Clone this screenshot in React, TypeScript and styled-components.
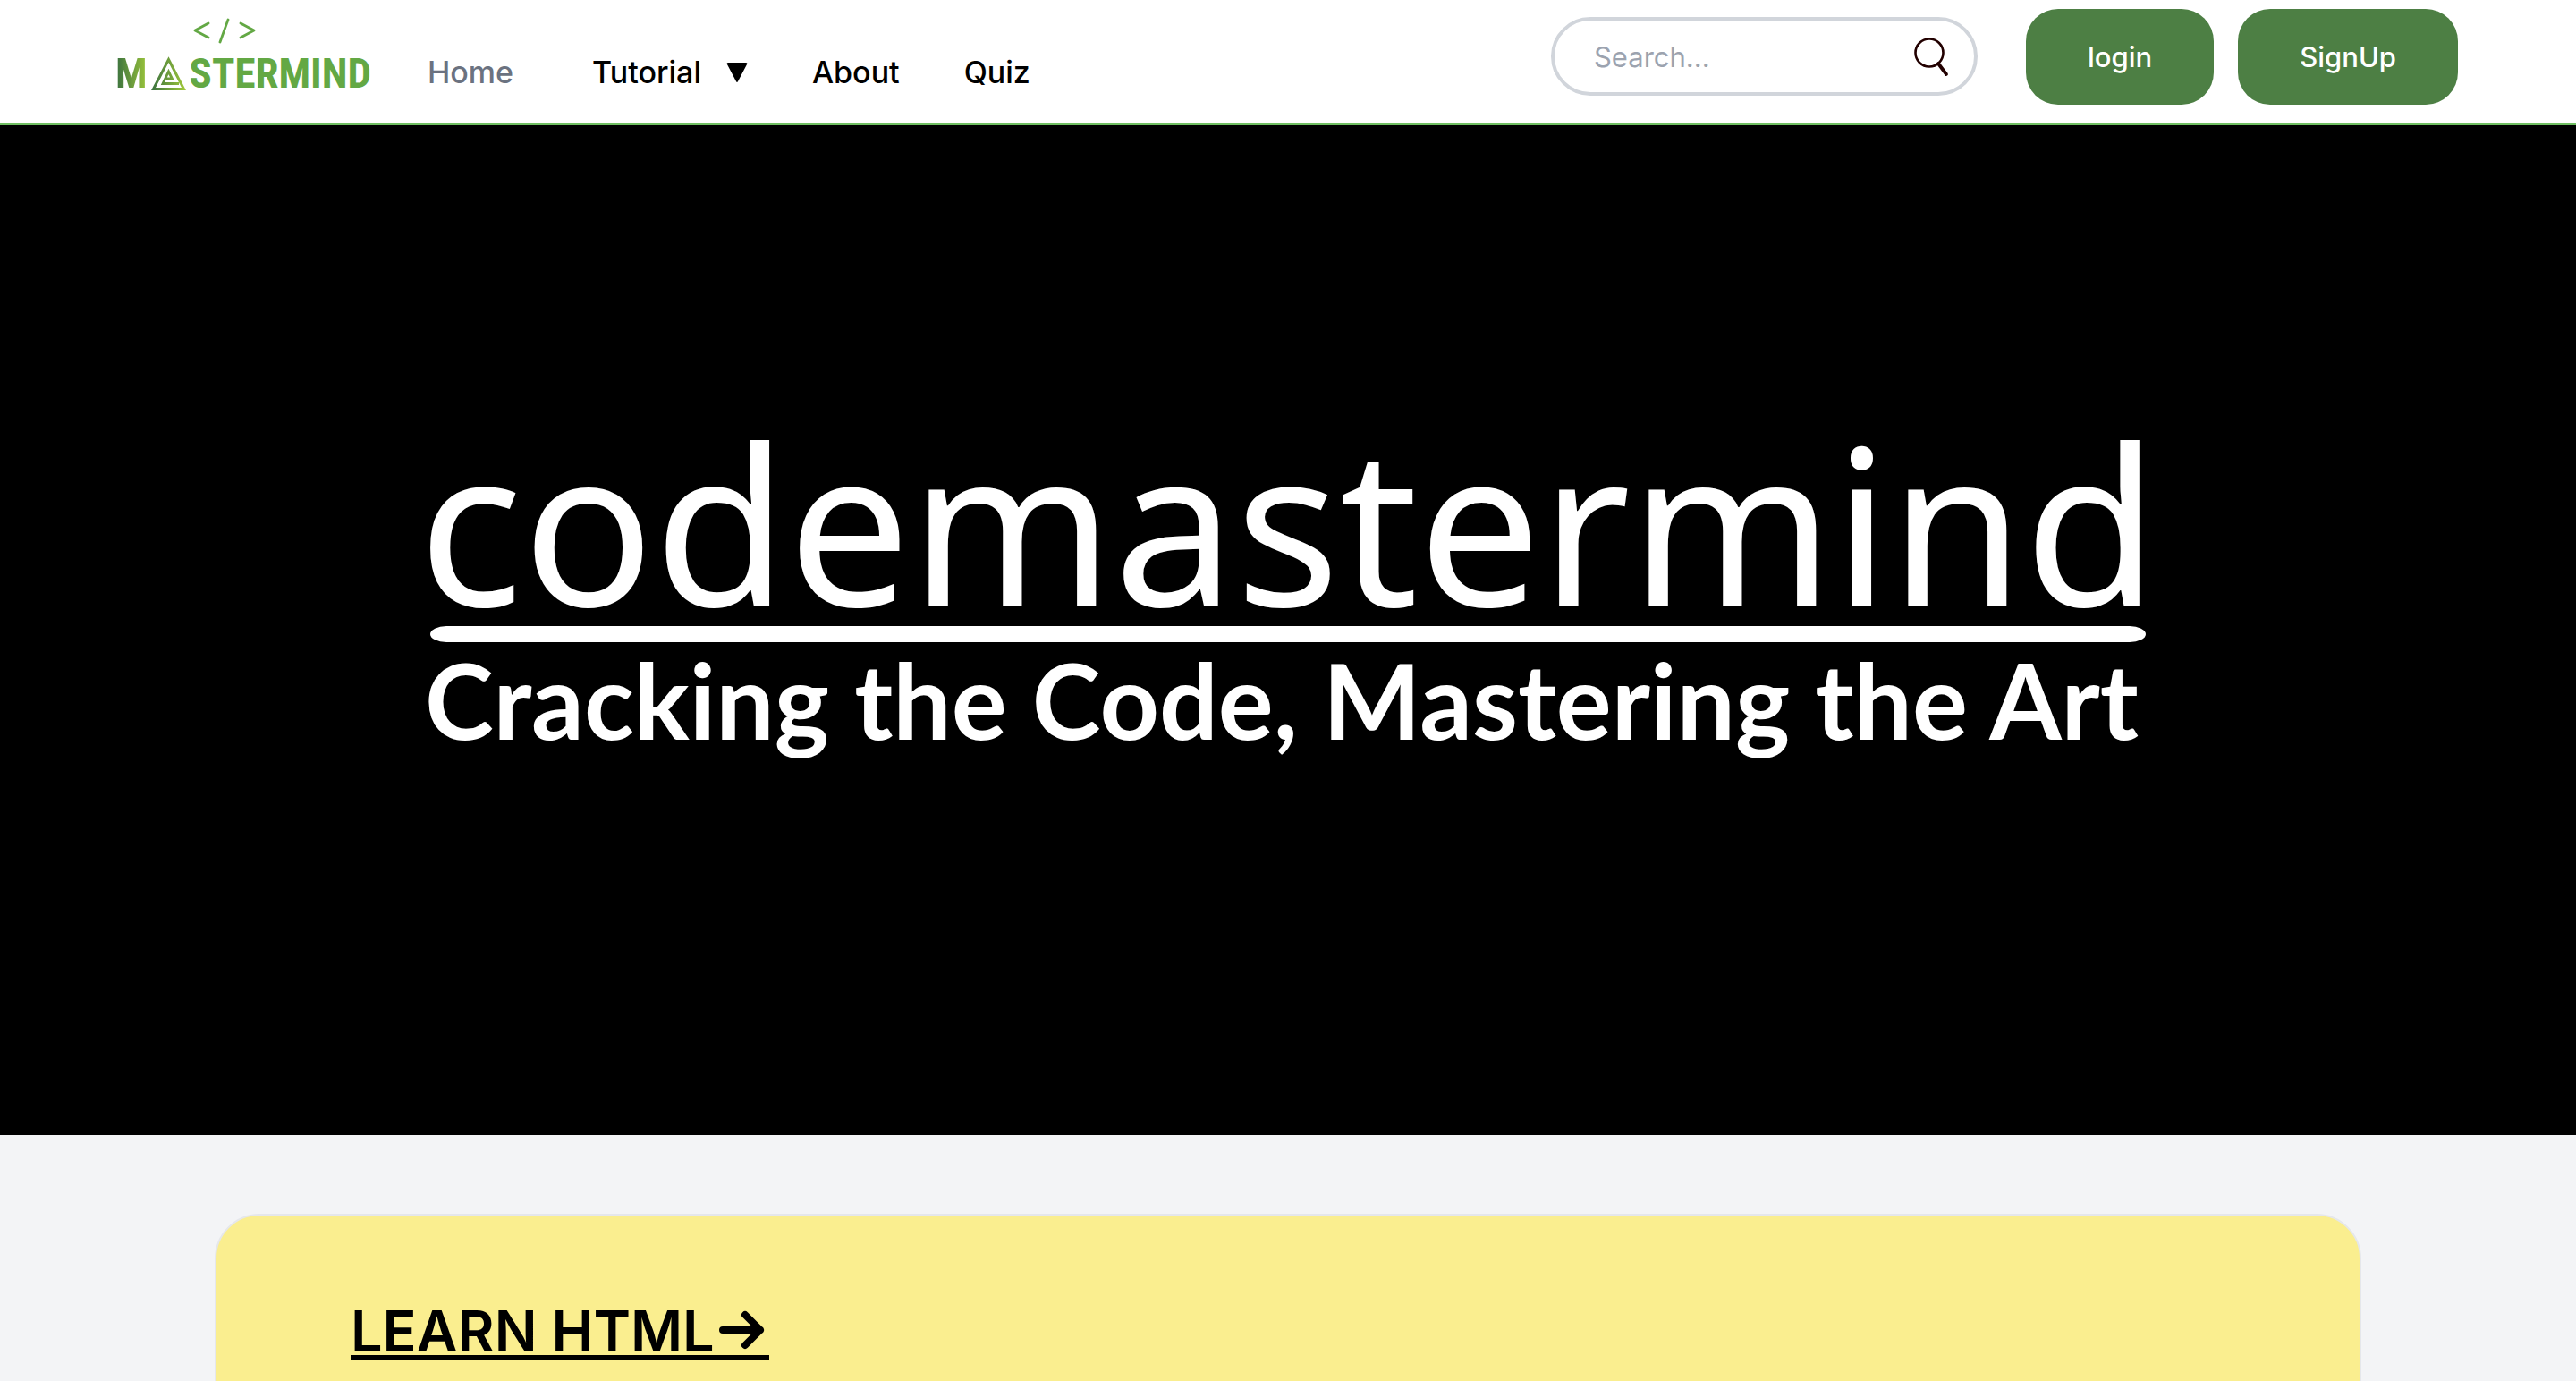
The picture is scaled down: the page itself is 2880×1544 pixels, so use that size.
import React from "react";
import styled, { createGlobalStyle } from "styled-components";

const GlobalStyle = createGlobalStyle`
  *, *::before, *::after { box-sizing: border-box; }
  body {
    margin: 0;
    background: #f3f4f6;
    color: #000;
    font-family: Inter, "Liberation Sans", sans-serif;
  }
`;

const Header = styled.header`
  display: flex;
  align-items: flex-start;
  height: 140px;
  padding: 10px 132px 0 131px;
  background: #fff;
  border-bottom: 2px solid #70bf62;
`;

const Brand = styled.a`
  display: flex;
  flex-direction: column;
  align-items: center;
  width: 282px;
  padding-top: 10px;
  color: #63a844;
  text-decoration: none;
`;

const CodeMark = styled.svg`
  display: block;
  width: 70px;
  height: 30px;
  margin-right: 42px;
`;

const BrandName = styled.span`
  display: flex;
  align-items: center;
  padding-top: 2px;
  font-family: "Roboto Condensed", Roboto, sans-serif;
  font-size: 47px;
  line-height: 60px;
  font-weight: 700;
`;

const BrandInitial = styled.span`
  color: transparent;
  background: linear-gradient(90deg, #39703f, #9bc53b);
  background-clip: text;
`;

const BrandTriangle = styled.svg`
  width: 39px;
  height: 38px;
  margin: 0 4px;
`;

const Nav = styled.nav`
  display: flex;
  gap: 72px;
  padding: 49px 0 0 65px;
  font-size: 34px;
  line-height: 44px;
  font-weight: 500;
`;

const NavLink = styled.a<{ $current?: boolean }>`
  display: flex;
  align-items: center;
  gap: 28px;
  margin-right: ${(p) => (p.$current ? "16px" : "0")};
  color: ${(p) => (p.$current ? "#6b7280" : "#000")};
  text-decoration: none;
`;

const Caret = styled.svg`
  width: 24px;
  height: 24px;
`;

const Actions = styled.div`
  display: flex;
  align-items: flex-start;
  gap: 27px;
  margin-left: auto;
`;

const SearchBox = styled.form`
  display: flex;
  align-items: center;
  width: 477px;
  height: 88px;
  margin: 9px 27px 0 0;
  padding: 2px 28px 0 44px;
  border: 4px solid #d1d5db;
  border-radius: 44px;
`;

const SearchInput = styled.input`
  flex: 1;
  min-width: 0;
  padding: 0;
  border: 0;
  outline: 0;
  background: transparent;
  font: 400 31px/48px Inter, "Liberation Sans", sans-serif;
  &::placeholder { color: #9ca3af; opacity: 1; }
`;

const SearchButton = styled.button`
  display: flex;
  padding: 0;
  border: 0;
  background: transparent;
  svg { width: 40px; height: 44px; }
`;

const Button = styled.button`
  height: 107px;
  padding: 0 69px;
  border: 0;
  border-radius: 36px;
  background: #4d7f44;
  color: #fff;
  font: 500 31px/48px Inter, "Liberation Sans", sans-serif;
`;

const Hero = styled.section`
  display: flex;
  flex-direction: column;
  align-items: center;
  height: 1129px;
  padding-top: 328px;
  background: #000;
  color: #fff;
`;

const Wordmark = styled.h1`
  margin: 0;
  font: 400 243px/232px "Noto Sans", "Open Sans", sans-serif;
`;

const Rule = styled.hr`
  width: 1918px;
  height: 18px;
  margin: 0;
  border: 0;
  border-radius: 18px / 9px;
  background: #fff;
`;

const Tagline = styled.p`
  margin: 0;
  padding-right: 14px;
  font: 700 116px/130px Lato, "Noto Sans", sans-serif;
`;

const Lessons = styled.main`
  padding: 88px 240px 0;
  height: 275px;
  overflow: hidden;
`;

const Card = styled.article`
  height: 600px;
  padding: 102px 150px;
  border: 2px solid #e5e7eb;
  border-radius: 50px;
  background: #faee8f;
`;

const LessonTitle = styled.h2`
  display: flex;
  margin: 0;
  font-size: 63px;
  line-height: 54px;
  font-weight: 600;
`;

const LessonLink = styled.a`
  display: flex;
  border-bottom: 6px solid #000;
  color: #000;
  text-decoration: none;
`;

const Arrow = styled.svg`
  width: 61px;
  height: 54px;
`;

export default function App() {
  return (
    <>
      <GlobalStyle />
      <Header>
        <Brand href="#" aria-label="Mastermind">
          <CodeMark viewBox="0 0 70 30" fill="none" stroke="currentColor" strokeWidth="2.8" strokeLinecap="round" strokeLinejoin="round">
            <path d="M17 6 2 14l15 8M39 2 30 27M53 6l15 8-15 8" />
          </CodeMark>
          <BrandName>
            <BrandInitial>M</BrandInitial>
            <BrandTriangle viewBox="0 0 39 38" fill="none">
              <defs>
                <linearGradient id="tri" gradientUnits="userSpaceOnUse" x1="0" y1="0" x2="39" y2="0">
                  <stop offset="0" stopColor="#39703f" />
                  <stop offset="1" stopColor="#a3cb3a" />
                </linearGradient>
              </defs>
              <path d="M19.5 3.5 36.5 36.5h-34Z" stroke="url(#tri)" strokeWidth="3" />
              <path d="M31 30.5H13L19.5 17l4 8H17" stroke="url(#tri)" strokeWidth="2.8" />
            </BrandTriangle>
            STERMIND
          </BrandName>
        </Brand>
        <Nav>
          <NavLink href="#" $current>Home</NavLink>
          <NavLink href="#">
            Tutorial
            <Caret viewBox="0 0 24 24"><path d="M2 1h20q2 0 1 2L13 22q-1 2-2 0L1 3Q0 1 2 1Z" /></Caret>
          </NavLink>
          <NavLink href="#">About</NavLink>
          <NavLink href="#">Quiz</NavLink>
        </Nav>
        <Actions>
          <SearchBox>
            <SearchInput type="search" placeholder="Search..." aria-label="Search" />
            <SearchButton type="button" aria-label="Submit search">
              <svg viewBox="0 0 40 44" fill="none" stroke="#200" strokeLinecap="round">
                <circle cx="18" cy="17" r="15.5" strokeWidth="2.6" />
                <path d="m28 29 9 12" strokeWidth="3.8" />
              </svg>
            </SearchButton>
          </SearchBox>
          <Button type="button">login</Button>
          <Button type="button">SignUp</Button>
        </Actions>
      </Header>
      <Hero>
        <Wordmark>codemastermind</Wordmark>
        <Rule />
        <Tagline>Cracking the Code, Mastering the Art</Tagline>
      </Hero>
      <Lessons>
        <Card>
          <LessonTitle>
            <LessonLink href="#">
              LEARN HTML
              <Arrow viewBox="1 0 61 54" fill="none" stroke="#000" strokeWidth="8" strokeLinecap="round" strokeLinejoin="round">
                <path d="M10 26h42M35 9l17 17-17 17" />
              </Arrow>
            </LessonLink>
          </LessonTitle>
        </Card>
      </Lessons>
    </>
  );
}
